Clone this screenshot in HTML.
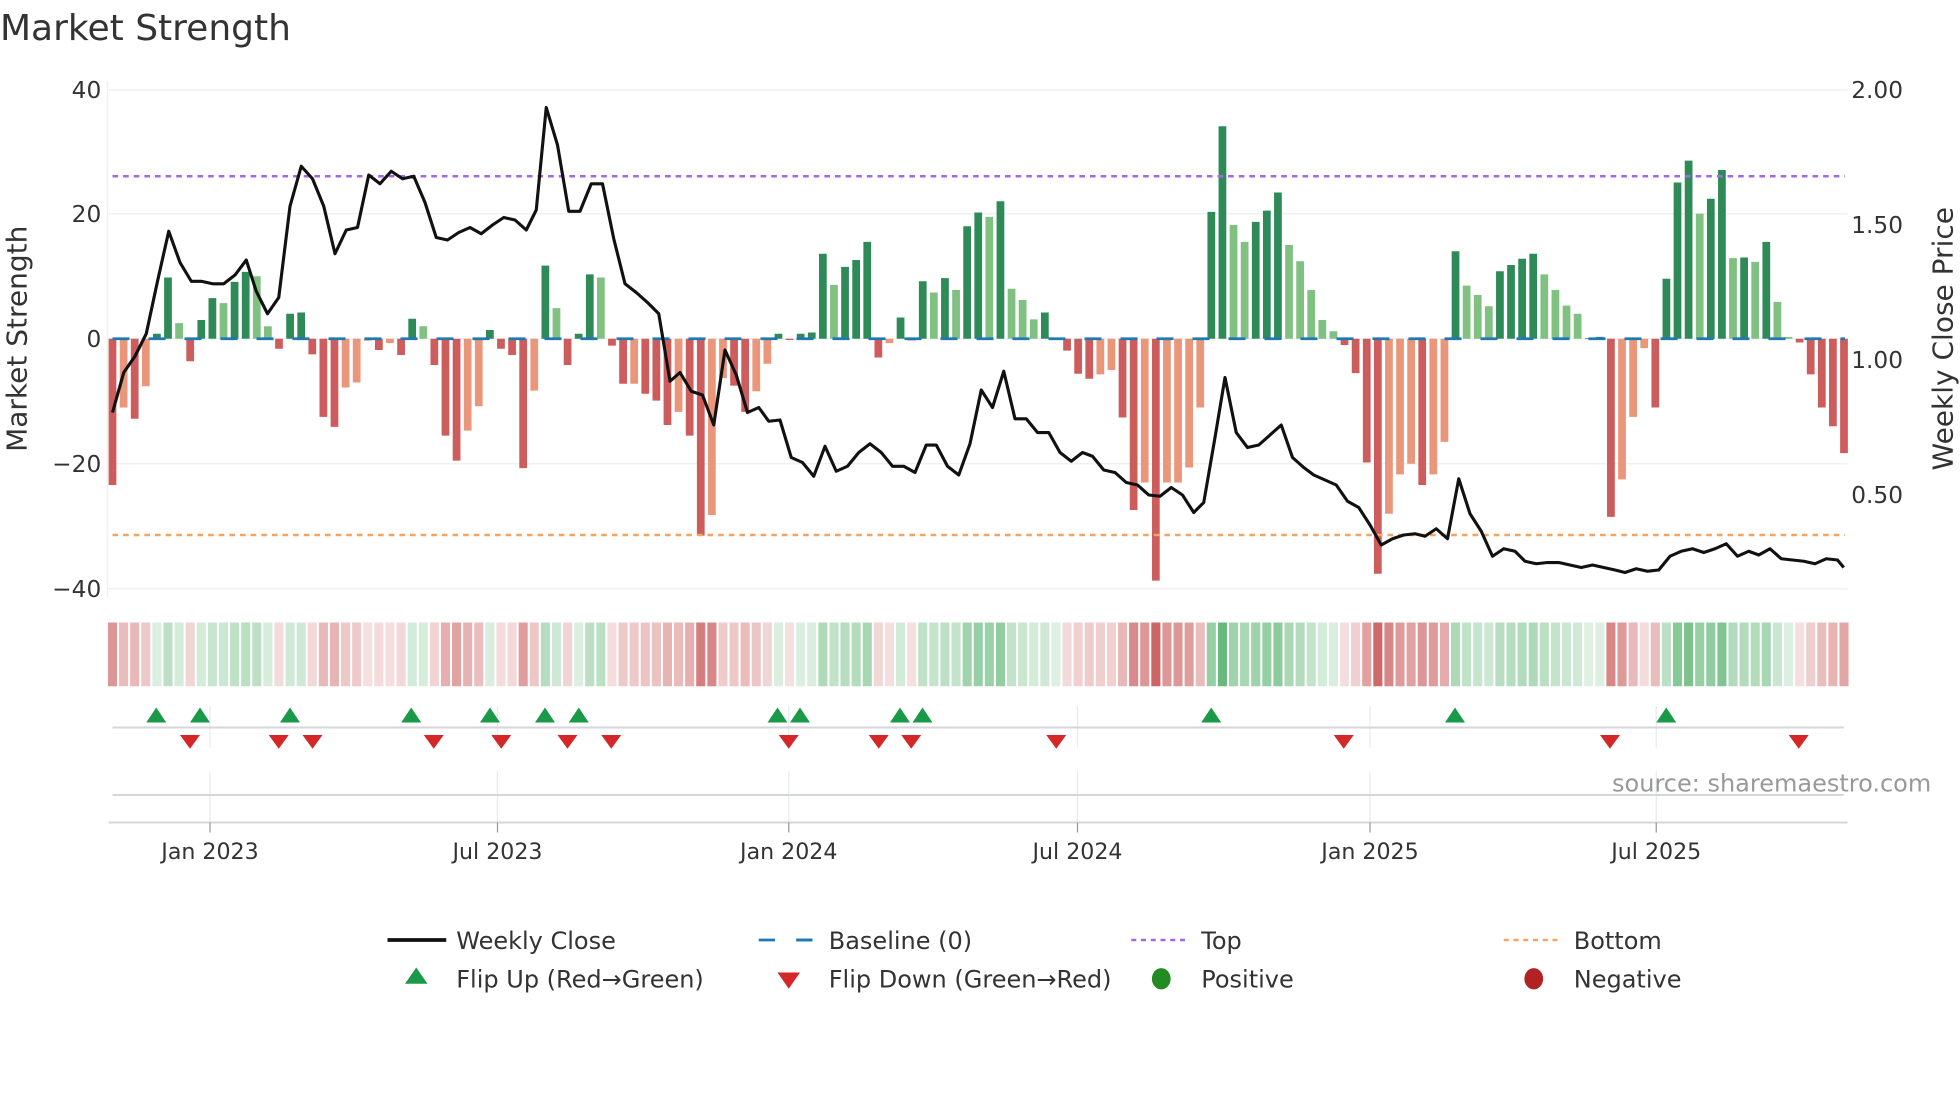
<!DOCTYPE html>
<html><head><meta charset="utf-8"><style>
html,body{margin:0;padding:0;background:#fff;width:1960px;height:1102px;overflow:hidden}
svg{display:block}
text{font-family:"DejaVu Sans","Liberation Sans",sans-serif;fill:#333}
</style></head><body>
<svg id="s" width="1960" height="1102" viewBox="0 0 1568 881.6" xmlns="http://www.w3.org/2000/svg">
<text x="0" y="32" font-size="28.8">Market Strength</text>
<g id="grid" stroke="#eef0f3" stroke-width="1.2">
<line x1="87" y1="72" x2="1478" y2="72"/><line x1="87" y1="171" x2="1478" y2="171"/><line x1="87" y1="271" x2="1478" y2="271"/><line x1="87" y1="371" x2="1478" y2="371"/><line x1="87" y1="471" x2="1478" y2="471"/>
<line x1="86" y1="65" x2="86" y2="478"/>
</g>
<g font-size="18.6" text-anchor="end">
<text x="81" y="78.5">40</text><text x="81" y="177.5">20</text><text x="81" y="277.5">0</text><text x="81" y="377.5">−20</text><text x="81" y="477.5">−40</text>
</g>
<g font-size="18.6">
<text x="1481" y="78.5">2.00</text><text x="1481" y="186.5">1.50</text><text x="1481" y="294.5">1.00</text><text x="1481" y="402.5">0.50</text>
</g>
<text transform="translate(21,271) rotate(-90)" font-size="22.4" text-anchor="middle">Market Strength</text>
<text transform="translate(1562,271) rotate(-90)" font-size="22.4" text-anchor="middle">Weekly Close Price</text>
<g id="bars"></g>
<line x1="90" y1="271" x2="1476" y2="271" stroke="#1f77b4" stroke-width="2.2" stroke-dasharray="13.6 15.2"/>
<line x1="90" y1="141" x2="1476" y2="141" stroke="#a368e3" stroke-width="2" stroke-dasharray="4.5 4"/>
<line x1="90" y1="428" x2="1476" y2="428" stroke="#f4a460" stroke-width="2" stroke-dasharray="4.5 4"/>
<polyline id="price" fill="none" stroke="#111" stroke-width="2.5" stroke-linejoin="round"/>
<g id="heat"></g>
<g stroke="#e6e9ee" stroke-width="1">
<line x1="168" y1="565" x2="168" y2="598"/><line x1="398" y1="565" x2="398" y2="598"/><line x1="631" y1="565" x2="631" y2="598"/><line x1="862" y1="565" x2="862" y2="598"/><line x1="1096" y1="565" x2="1096" y2="598"/><line x1="1325" y1="565" x2="1325" y2="598"/>
<line x1="168" y1="617" x2="168" y2="658"/><line x1="398" y1="617" x2="398" y2="658"/><line x1="631" y1="617" x2="631" y2="658"/><line x1="862" y1="617" x2="862" y2="658"/><line x1="1096" y1="617" x2="1096" y2="658"/><line x1="1325" y1="617" x2="1325" y2="658"/>
</g>
<line x1="90" y1="582" x2="1475" y2="582" stroke="#d4d6da" stroke-width="1.6"/>
<line x1="90" y1="636" x2="1475" y2="636" stroke="#d4d6da" stroke-width="1.6"/>
<line x1="87" y1="658" x2="1478" y2="658" stroke="#d4d6da" stroke-width="1.6"/>
<g id="flips"></g>
<g stroke="#999" stroke-width="1">
<line x1="168" y1="658" x2="168" y2="666"/><line x1="398" y1="658" x2="398" y2="666"/><line x1="631" y1="658" x2="631" y2="666"/><line x1="862" y1="658" x2="862" y2="666"/><line x1="1096" y1="658" x2="1096" y2="666"/><line x1="1325" y1="658" x2="1325" y2="666"/>
</g>
<g font-size="17.7" text-anchor="middle">
<text x="168" y="687">Jan 2023</text><text x="398" y="687">Jul 2023</text><text x="631" y="687">Jan 2024</text><text x="862" y="687">Jul 2024</text><text x="1096" y="687">Jan 2025</text><text x="1325" y="687">Jul 2025</text>
</g>
<text x="1545" y="633" font-size="19.2" text-anchor="end" style="fill:#999">source: sharemaestro.com</text>
<g font-size="19.2">
<line x1="310" y1="752" x2="357" y2="752" stroke="#111" stroke-width="3"/>
<text x="365" y="759">Weekly Close</text>
<line x1="607" y1="752" x2="650" y2="752" stroke="#1f77b4" stroke-width="2.2" stroke-dasharray="13 17"/>
<line x1="637" y1="752" x2="650" y2="752" stroke="#1f77b4" stroke-width="2.2"/>
<text x="663" y="759">Baseline (0)</text>
<line x1="905" y1="752" x2="948" y2="752" stroke="#a368e3" stroke-width="2" stroke-dasharray="4 3.8"/>
<text x="961" y="759">Top</text>
<line x1="1203" y1="752" x2="1247" y2="752" stroke="#f4a460" stroke-width="2" stroke-dasharray="4 3.8"/>
<text x="1259" y="759">Bottom</text>
<polygon points="324,787 342,787 333,774" fill="#1a9a48"/>
<text x="365" y="790">Flip Up (Red→Green)</text>
<polygon points="622,778 640,778 631,791" fill="#d62728"/>
<text x="663" y="790">Flip Down (Green→Red)</text>
<ellipse cx="929" cy="783" rx="7.5" ry="8.5" fill="#228b22"/>
<text x="961" y="790">Positive</text>
<ellipse cx="1227" cy="783" rx="7.5" ry="8.5" fill="#b22222"/>
<text x="1259" y="790">Negative</text>
</g>
</svg>
<script>
var V="-23.4 -11L -12.8 -7.6L 0.8 9.8 2.5L -3.6 3 6.5 5.7L 9.1 10.7 10L 2L -1.6 4 4.2 -2.5 -12.5 -14.1 -7.8L -7L -0.3L -1.8 -0.7L -2.6 3.2 2L -4.2 -15.5 -19.5 -14.7L -10.8L 1.4 -1.6 -2.6 -20.7 -8.3L 11.7 4.9L -4.2 0.8 10.3 9.8L -1.1 -7.2 -7.2L -8.8 -9.9 -13.8 -11.7L -15.5 -31.5 -28.2L -6.3L -7.5 -11.7 -8.4L -4L 0.8 -0.2 0.8 1 13.6 8.6L 11.5 12.6 15.5 -3 -0.7L 3.4 -0.3L 9.2 7.4L 9.7 7.8L 18 20.2 19.5L 22 8L 6.2L 3.1L 4.2 0 -1.9 -5.6 -6.4 -5.7L -5L -12.6 -27.4 -23L -38.7 -23L -23L -20.6L -11L 20.3 34 18.2L 15.5L 18.7 20.5 23.4 15L 12.4L 7.8L 3L 1.2L -1 -5.5 -19.8 -37.6 -28L -21.7L -20L -23.4 -21.7L -16.5L 14 8.5L 7L 5.2L 10.8 11.8 12.8 13.6 10.3L 7.8L 5.3L 4L 0 0.3 -28.5 -22.5L -12.5L -1.5L -11 9.6 25 28.5 20L 22.4 27 12.9L 13 12.3L 15.5 5.9L 0.3L -0.6 -5.7 -11 -14 -18.3".split(" ");
var NS="http://www.w3.org/2000/svg";
function el(t,a,p){var e=document.createElementNS(NS,t);for(var k in a)e.setAttribute(k,a[k]);document.getElementById(p).appendChild(e);return e;}
var sp=(1475.2-90)/156;
V.forEach(function(s,i){
 var L=s.indexOf("L")>=0, v=parseFloat(s), cx=90+i*sp;
 var col = v>=0 ? (L?"#80c080":"#2e8b57") : (L?"#e9967a":"#cd5c5c");
 var h=Math.abs(v)*5; if(h<0.6)h=0.6;
 el("rect",{x:cx-3.1,y:v>=0?271-h:271,width:6.2,height:h,fill:col},"bars");
 var a=Math.min(1,Math.abs(v)/40)*0.75+0.18;
 var b = v>=0?[70,170,95]:[200,85,85];
 var c=b.map(function(q){return Math.round(255*(1-a)+q*a)});
 el("rect",{x:cx-sp/2+0.8,y:498,width:sp-1.6,height:51,fill:"rgb("+c.join(",")+")"},"heat");
});
var P=[90,330,99,298,108,285,117,267,126,225,135,185,144,210,153,225,161,225,170,227,179,227,188,220,197,208,205,233,214,251,223,238,232,165,241,133,250,143,259,165,268,203,277,184,286,182,295,140,304,147,313,137,322,143,331,141,340,162,349,190,358,192,367,186,376,182,385,187,394,180,403,174,412,176,421,184,429,168,437,86,446,116,455,169,464,169,473,147,482,147,491,191,500,227,509,234,518,242,527,251,536,305,544,298,553,313,562,316,571,340,580,280,589,300,598,330,607,326,615,337,624,336,633,366,642,370,651,381,660,357,669,377,678,373,687,362,696,355,705,362,714,373,723,373,732,378,741,356,749,356,758,373,767,380,776,355,785,312,794,326,803,297,812,335,821,335,830,346,839,346,848,362,857,369,866,362,874,365,883,376,892,378,901,386,910,388,919,396,928,397,937,390,946,396,955,410,963,402,972,350,980,302,989,346,998,358,1007,356,1016,348,1025,340,1034,366,1043,374,1051,380,1060,384,1069,388,1078,401,1087,406,1096,420,1105,436,1114,431,1123,428,1132,427,1140,429,1149,423,1158,431,1167,383,1176,411,1185,425,1194,445,1203,439,1212,441,1220,449,1229,451,1238,450,1247,450,1256,452,1265,454,1274,452,1283,454,1292,456,1300,458,1309,455,1318,457,1327,456,1336,445,1345,441,1354,439,1363,442,1372,439,1381,435,1390,445,1399,441,1407,444,1416,439,1425,447,1434,448,1443,449,1452,451,1461,447,1470,448,1475,454];
var pts=[];for(var i=0;i<P.length;i+=2)pts.push(P[i]+","+P[i+1]);
document.getElementById("price").setAttribute("points",pts.join(" "));
[125,160,232,329,392,436,463,622,640,720,738,969,1164,1333].forEach(function(x){
 el("polygon",{points:(x-8)+",578 "+(x+8)+",578 "+x+",566",fill:"#1a9a48"},"flips");});
[152,223,250,347,401,454,489,631,703,729,845,1075,1288,1439].forEach(function(x){
 el("polygon",{points:(x-8)+",588 "+(x+8)+",588 "+x+",599",fill:"#d62728"},"flips");});
</script>
</body></html>
